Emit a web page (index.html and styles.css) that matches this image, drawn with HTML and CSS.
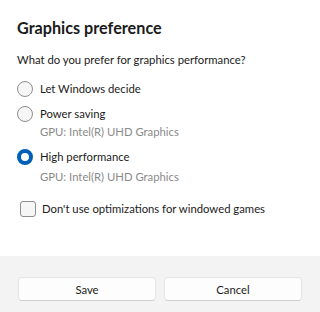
FILE: index.html
```html
<!DOCTYPE html>
<html>
<head>
<meta charset="utf-8">
<link rel="stylesheet" href="styles.css">
</head>
<body>
<div class="dialog">
  <div class="content">
    <h1 class="title">Graphics preference</h1>
    <p class="question">What do you prefer for graphics performance?</p>
    <div class="option first">
      <span class="radio"></span>
      <span class="label">Let Windows decide</span>
    </div>
    <div class="option second">
      <span class="radio"></span>
      <span class="label">Power saving</span>
    </div>
    <div class="sub tight">GPU: Intel(R) UHD Graphics</div>
    <div class="option">
      <span class="radio checked"></span>
      <span class="label">High performance</span>
    </div>
    <div class="sub">GPU: Intel(R) UHD Graphics</div>
    <div class="check-row">
      <span class="checkbox"></span>
      <span class="label">Don't use optimizations for windowed games</span>
    </div>
  </div>
  <div class="footer">
    <button class="btn">Save</button>
    <button class="btn">Cancel</button>
  </div>
</div>
</body>
</html>
```
FILE: styles.css
```css
html, body {
  margin: 0;
  padding: 0;
  background: #ffffff;
}
.dialog {
  width: 320px;
  height: 312px;
  display: flex;
  flex-direction: column;
  font-family: "Lato", "Open Sans", sans-serif;
  color: #1b1b1b;
}
.content {
  flex: 1;
  padding: 17px 17px 0 17px;
  display: flex;
  flex-direction: column;
}
.title {
  margin: 0;
  font-size: 16.2px;
  font-weight: 700;
  line-height: 22px;
}
.question {
  margin: 13px 0 0 0;
  font-size: 11.3px;
  line-height: 16px;
}
.option {
  display: flex;
  align-items: center;
  height: 16px;
  margin-top: 9px;
  gap: 7px;
}
.option.first {
  margin-top: 13px;
}
.option.second {
  margin-top: 8.5px;
}
.radio {
  box-sizing: border-box;
  width: 16px;
  height: 16px;
  border-radius: 50%;
  border: 1px solid #8e8e8e;
  background: #f6f6f6;
  flex: none;
}
.radio.checked {
  border: 4.5px solid #005fb8;
  background: #ffffff;
}
.label {
  font-size: 11.3px;
  line-height: 16px;
}
.sub {
  margin: 4px 0 0 23px;
  font-size: 11.3px;
  line-height: 16px;
  color: #8a8a8a;
}
.sub.tight {
  margin-top: 2.5px;
}
.check-row {
  display: flex;
  align-items: center;
  margin-top: 16px;
  margin-left: 3px;
  gap: 6px;
}
.checkbox {
  box-sizing: border-box;
  width: 16px;
  height: 16px;
  border-radius: 3px;
  border: 1px solid #8e8e8e;
  background: #f6f6f6;
  flex: none;
}
.footer {
  height: 56px;
  background: #f3f3f3;
  box-sizing: border-box;
  padding: 21px 18px 0 18px;
  display: flex;
  gap: 8px;
  align-items: flex-start;
}
.btn {
  flex: 1;
  height: 24px;
  border: 1px solid #e5e5e5;
  border-bottom-color: #d0d0d0;
  border-radius: 4px;
  background: #fdfdfd;
  font-family: "Lato", "Open Sans", sans-serif;
  font-size: 11.3px;
  color: #1b1b1b;
  padding: 0;
}
```
